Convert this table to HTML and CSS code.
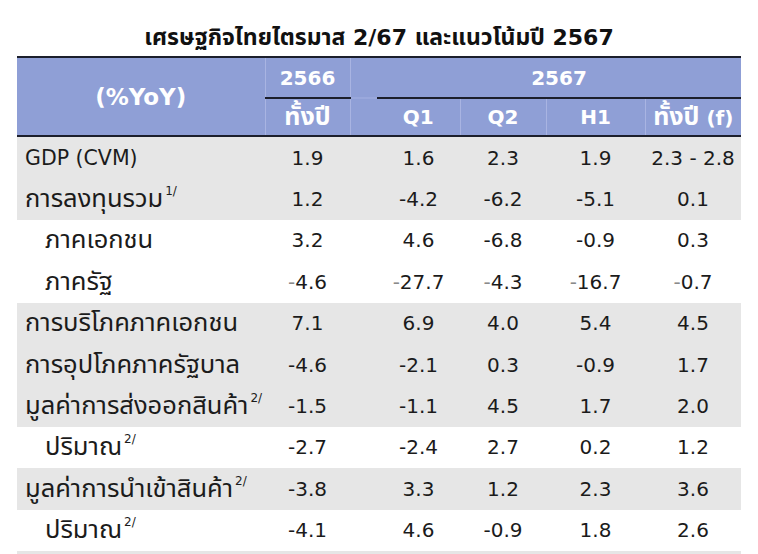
FILE: index.html
```html
<!DOCTYPE html>
<html lang="th">
<head>
<meta charset="utf-8">
<title>เศรษฐกิจไทยไตรมาส 2/67</title>
<link rel="stylesheet" href="styles.css">
</head>
<body>
<div class="page">
  <h1 class="title"><span class="tt">เศรษฐกิจไทยไตรมาส</span> 2/67 <span class="tt">และแนวโน้มปี</span> 2567</h1>
  <table class="tbl">
    <colgroup>
      <col class="c-label"><col class="c-y66"><col class="c-gap"><col class="c-q1"><col class="c-q2"><col class="c-h1"><col class="c-f">
    </colgroup>
    <thead>
      <tr class="h1row">
        <th class="yoy" rowspan="2">(%YoY)</th>
        <th class="y66 vl">2566</th>
        <th class="gap vl gapline"></th>
        <th class="y67" colspan="4">2567</th>
      </tr>
      <tr class="h2row">
        <th class="y66b vl"><span class="th">ทั้งปี</span></th>
        <th class="gap vl"></th>
        <th>Q1</th>
        <th class="vl">Q2</th>
        <th class="vl">H1</th>
        <th class="vl"><span class="th">ทั้งปี</span> (f)</th>
      </tr>
    </thead>
    <tbody>
      <tr class="g"><td class="lab latin">GDP (CVM)</td><td>1.9</td><td></td><td>1.6</td><td>2.3</td><td>1.9</td><td>2.3 - 2.8</td></tr>
      <tr class="g"><td class="lab"><span class="t">การลงทุนรวม</span><sup>1/</sup></td><td>1.2</td><td></td><td>-4.2</td><td>-6.2</td><td>-5.1</td><td>0.1</td></tr>
      <tr><td class="lab sub"><span class="t">ภาคเอกชน</span></td><td>3.2</td><td></td><td>4.6</td><td>-6.8</td><td>-0.9</td><td>0.3</td></tr>
      <tr><td class="lab sub"><span class="t">ภาครัฐ</span></td><td><span class="mn">-</span>4.6</td><td></td><td><span class="mn">-</span>27.7</td><td><span class="mn">-</span>4.3</td><td><span class="mn">-</span>16.7</td><td><span class="mn">-</span>0.7</td></tr>
      <tr class="g"><td class="lab"><span class="t">การบริโภคภาคเอกชน</span></td><td>7.1</td><td></td><td>6.9</td><td>4.0</td><td>5.4</td><td>4.5</td></tr>
      <tr class="g"><td class="lab"><span class="t">การอุปโภคภาครัฐบาล</span></td><td>-4.6</td><td></td><td>-2.1</td><td>0.3</td><td>-0.9</td><td>1.7</td></tr>
      <tr class="g"><td class="lab"><span class="t">มูลค่าการส่งออกสินค้า</span><sup>2/</sup></td><td>-1.5</td><td></td><td>-1.1</td><td>4.5</td><td>1.7</td><td>2.0</td></tr>
      <tr><td class="lab sub"><span class="t">ปริมาณ</span><sup>2/</sup></td><td>-2.7</td><td></td><td>-2.4</td><td>2.7</td><td>0.2</td><td>1.2</td></tr>
      <tr class="g"><td class="lab"><span class="t">มูลค่าการนำเข้าสินค้า</span><sup>2/</sup></td><td>-3.8</td><td></td><td>3.3</td><td>1.2</td><td>2.3</td><td>3.6</td></tr>
      <tr><td class="lab sub"><span class="t">ปริมาณ</span><sup>2/</sup></td><td>-4.1</td><td></td><td>4.6</td><td>-0.9</td><td>1.8</td><td>2.6</td></tr>
      <tr class="g last"><td></td><td></td><td></td><td></td><td></td><td></td><td></td></tr>
    </tbody>
  </table>
</div>
</body>
</html>
```
FILE: styles.css
```css
html, body {
  margin: 0;
  padding: 0;
  background: #ffffff;
}
body {
  font-family: Tahoma, "DejaVu Sans", "Noto Sans Thai", "Noto Sans", sans-serif;
  color: #1b1b1b;
  width: 758px;
  height: 554px;
  overflow: hidden;
}
.page {
  padding: 0 17px;
}
.title {
  margin: 0;
  height: 56px;
  padding-top: 22px;
  box-sizing: border-box;
  font-size: 22px;
  line-height: 30px;
  font-weight: bold;
  text-align: center;
  color: #111;
  white-space: nowrap;
}
.tt {
  font-size: 23px;
}
.tbl {
  width: 724px;
  border-collapse: collapse;
  table-layout: fixed;
}
.c-label { width: 248px; }
.c-y66 { width: 85px; }
.c-gap { width: 27px; }
.c-q1 { width: 83px; }
.c-q2 { width: 86px; }
.c-h1 { width: 99px; }
.c-f { width: 96px; }

thead th {
  background: #8f9fd6;
  color: #ffffff;
  font-weight: bold;
  font-size: 20px;
  line-height: 24px;
  padding: 0;
  text-align: center;
  white-space: nowrap;
}
thead th .th {
  font-size: 25px;
}
.h1row th {
  border-top: 2px solid #1c1f2c;
  height: 39px;
}
.h2row th {
  border-bottom: 2px solid #1c1f2c;
  height: 36px;
}
.yoy {
  border-bottom: 2px solid #1c1f2c;
  font-size: 23px !important;
}
.vl {
  border-left: 1px solid #a9b4e2;
}
.y66, .y67 {
  border-bottom: 2px solid #1c1f2c;
}
.gapline {
  border-bottom: 2px solid #9aa8dc;
}
tbody td {
  height: 41.4px;
  padding: 0;
  font-size: 20px;
  line-height: 24px;
  text-align: center;
  white-space: nowrap;
}
tbody tr.last td {
  height: 3px;
  line-height: 0;
}
tbody tr.g td {
  background: #e6e6e6;
}
td.lab {
  text-align: left;
  padding-left: 8px;
}
td.latin {
  font-size: 20.5px;
}
td.sub {
  padding-left: 28px;
}
.t {
  font-size: 25.5px;
}
sup {
  font-size: 12px;
  vertical-align: 12px;
  line-height: 0;
  margin-left: 2px;
}
.mn {
  color: #8a8a8a;
}
```
